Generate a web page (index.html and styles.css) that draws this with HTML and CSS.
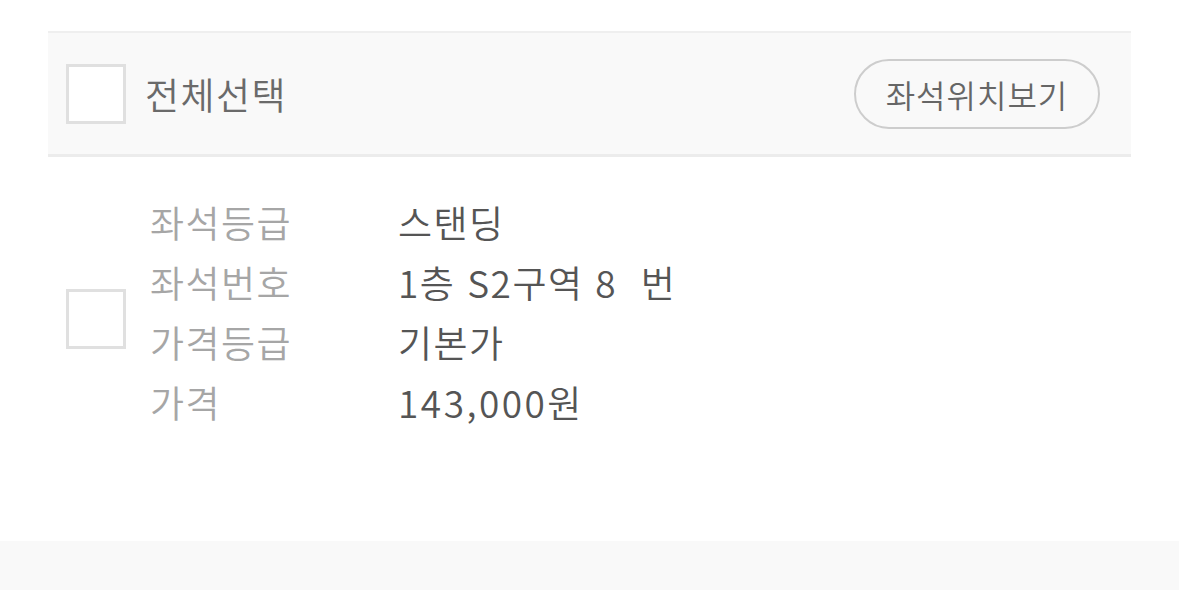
FILE: index.html
```html
<!DOCTYPE html>
<html lang="ko">
<head>
    <meta charset="UTF-8">
    <title>좌석 선택</title>
    <link rel="stylesheet" href="styles.css">
</head>
<body>
    <div class="seat-list">
        <div class="list-head">
            <label class="select-all">
                <span class="check"></span>
                <span class="select-all-text">전체선택</span>
            </label>
            <button class="btn-map">좌석위치보기</button>
        </div>

        <div class="seat-item">
            <span class="check item-check"></span>
            <dl class="seat-info">
                <dt>좌석등급</dt><dd>스탠딩</dd>
                <dt>좌석번호</dt><dd>1층 S2구역 8&nbsp;&nbsp;번</dd>
                <dt>가격등급</dt><dd>기본가</dd>
                <dt>가격</dt><dd class="price">143,000원</dd>
            </dl>
        </div>
    </div>
    <div class="page-foot"></div>
</body>
</html>
```

FILE: styles.css
```css
body {
    margin: 0;
    background: #fff;
    font-family: "Noto Sans CJK KR", "Noto Sans", sans-serif;
}

.seat-list {
    padding: 31px 48px 0;
}

/* header bar with select-all and map button */
.list-head {
    display: flex;
    align-items: center;
    justify-content: space-between;
    height: 121px;
    padding: 0 31px 0 18px;
    background: #f9f9f9;
    border-top: 2px solid #efefef;
    border-bottom: 3px solid #ececec;
}

.select-all {
    display: flex;
    align-items: center;
    gap: 19px;
}

.select-all-text {
    font-size: 37px;
    font-weight: 350;
    color: #6a6a6a;
    letter-spacing: 1.5px;
}

.check {
    display: block;
    box-sizing: border-box;
    width: 60px;
    height: 60px;
    border: 3px solid #e0e0e0;
    background: #fff;
    flex-shrink: 0;
}

.btn-map {
    box-sizing: border-box;
    width: 246px;
    height: 70px;
    border: 2px solid #cdcdcd;
    border-radius: 35px;
    background: #f9f9f9;
    font-family: inherit;
    font-size: 32px;
    font-weight: 350;
    color: #666;
    letter-spacing: 1px;
    padding: 0;
}

/* one seat row */
.seat-item {
    display: flex;
    align-items: flex-start;
    gap: 24px;
    height: 384px;
    padding: 35px 0 0 18px;
    box-sizing: border-box;
}

.item-check {
    margin-top: 97px;
}

.seat-info {
    display: grid;
    grid-template-columns: 248px auto;
    margin: 0;
    font-size: 37px;
    font-weight: 350;
    line-height: 60px;
    letter-spacing: 1.5px;
}

.seat-info dt {
    color: #a6a6a6;
}

.seat-info dd {
    margin: 0;
    color: #555;
}

.seat-info .price {
    letter-spacing: 2.5px;
}

.page-foot {
    height: 50px;
    background: #f9f9f9;
}
```
